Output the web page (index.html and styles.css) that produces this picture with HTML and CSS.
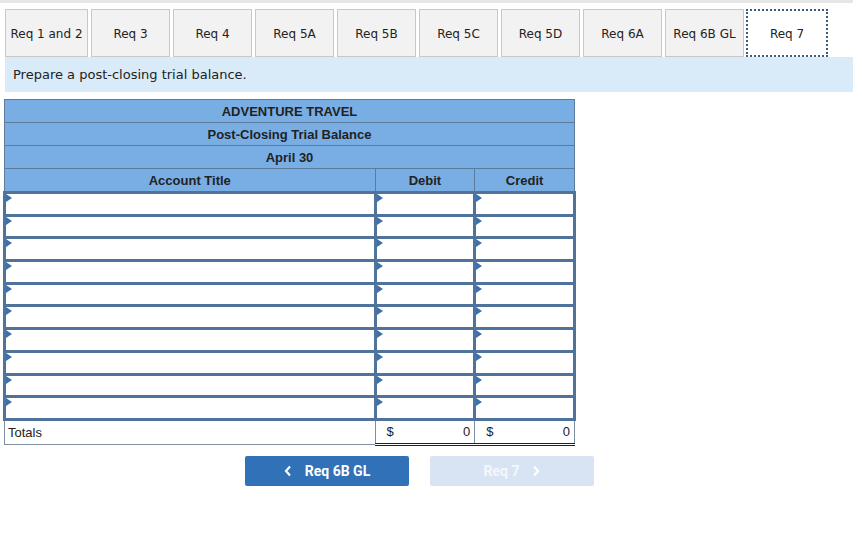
FILE: index.html
```html
<!DOCTYPE html>
<html lang="en">
<head>
  <meta charset="UTF-8" />
  <title>Post-Closing Trial Balance</title>
  <link rel="stylesheet" href="styles.css">
</head>
<body>
  <div class="topline"></div>

  <div class="tabs">
    <div class="tab first">Req 1 and 2</div>
    <div class="tab">Req 3</div>
    <div class="tab">Req 4</div>
    <div class="tab">Req 5A</div>
    <div class="tab">Req 5B</div>
    <div class="tab">Req 5C</div>
    <div class="tab">Req 5D</div>
    <div class="tab">Req 6A</div>
    <div class="tab">Req 6B GL</div>
    <div class="tab active">Req 7</div>
  </div>

  <div class="prompt">Prepare a post-closing trial balance.</div>

  <div class="sheet">
    <table class="tb">
      <colgroup>
        <col class="c-title">
        <col class="c-amt">
        <col class="c-amt">
      </colgroup>
      <thead>
        <tr><th colspan="3">ADVENTURE TRAVEL</th></tr>
        <tr><th colspan="3">Post-Closing Trial Balance</th></tr>
        <tr><th colspan="3">April 30</th></tr>
        <tr><th>Account Title</th><th>Debit</th><th>Credit</th></tr>
      </thead>
      <tbody id="rows"></tbody>
      <tfoot>
        <tr class="totals">
          <td class="t-label">Totals</td>
          <td class="t-amt"><span>$</span><span>0</span></td>
          <td class="t-amt"><span>$</span><span>0</span></td>
        </tr>
      </tfoot>
    </table>
  </div>

  <div class="nav">
    <div class="btn">
      <svg width="8" height="12" viewBox="0 0 8 12"><polyline points="6,1.5 2,6 6,10.5" fill="none" stroke="#fff" stroke-width="2.2"/></svg>
      <span>Req 6B GL</span>
    </div>
    <div class="btn off">
      <span>Req 7</span>
      <svg width="8" height="12" viewBox="0 0 8 12"><polyline points="2,1.5 6,6 2,10.5" fill="none" stroke="#fff" stroke-width="2.2"/></svg>
    </div>
  </div>

  <script>
    const body = document.getElementById("rows");
    for (let i = 0; i < 10; i++) {
      const tr = document.createElement("tr");
      tr.className = "entry";
      for (let j = 0; j < 3; j++) {
        const td = document.createElement("td");
        td.className = "in";
        tr.appendChild(td);
      }
      body.appendChild(tr);
    }
  </script>
</body>
</html>
```

FILE: styles.css
```css
body {
  margin: 0;
  font-family: "DejaVu Sans", Verdana, sans-serif;
  background: #fff;
  color: #222;
}

.topline {
  width: 853px;
  height: 3px;
  background: #e6e6e6;
}

.tabs {
  display: flex;
  gap: 3px;
  padding: 6px 0 0 5px;
}

.tab {
  width: 79px;
  height: 48px;
  box-sizing: border-box;
  padding-top: 2px;
  border: 1px solid #c8c8c8;
  background: #f2f2f2;
  font-size: 12px;
  display: flex;
  align-items: center;
  justify-content: center;
  white-space: nowrap;
}

.tab.first {
  width: 83px;
}

.tab.active {
  width: 82px;
  margin-left: -1px;
  background: #fff;
  border: 2px dotted #3d5d7e;
}

.prompt {
  width: 848px;
  height: 35px;
  margin-left: 5px;
  box-sizing: border-box;
  padding-left: 8px;
  background: #d9eaf8;
  font-size: 13px;
  line-height: 36px;
}

.sheet {
  padding: 7px 0 0 3px;
}

.tb {
  border-collapse: collapse;
  width: 573px;
  font-family: "Liberation Sans", Arial, sans-serif;
  font-size: 13px;
  color: #222;
}

.c-title {
  width: 372px;
}

.c-amt {
  width: 100px;
}

.tb th {
  height: 22px;
  padding: 0;
  background: #79aee5;
  border: 1px solid #5d7c9c;
  font-weight: bold;
}

.tb td.in {
  position: relative;
  height: 19.7px;
  padding: 0;
  border: 3px solid #50739c;
  background: #fff;
}

/* petit triangle de saisie */
.tb td.in::before {
  content: "";
  position: absolute;
  top: 0;
  left: 0;
  border-top: 4px solid transparent;
  border-bottom: 4px solid transparent;
  border-left: 6px solid #3d70ad;
}

.totals td {
  height: 22px;
  padding: 0;
  border-left: 1px solid #7f8f9f;
  border-right: 1px solid #7f8f9f;
  border-bottom: 1px solid #7f8f9f;
}

.t-label {
  padding-left: 3px !important;
}

.totals td.t-amt {
  border-left: 1px solid #333;
  border-bottom: 3px double #222;
}

.t-amt span:first-child {
  float: left;
  padding-left: 11px;
}

.t-amt span:last-child {
  float: right;
  padding-right: 4px;
}

.nav {
  display: flex;
  gap: 21px;
  margin: 10px 0 0 245px;
}

.btn {
  width: 164px;
  height: 30px;
  border-radius: 2px;
  background: #3171b7;
  color: #fff;
  font-family: Roboto, "Liberation Sans", sans-serif;
  font-weight: bold;
  font-size: 14px;
  display: flex;
  align-items: center;
  justify-content: center;
  gap: 13px;
}

.btn.off {
  background: #d8e4f3;
  color: #f4f7fb;
}
```
